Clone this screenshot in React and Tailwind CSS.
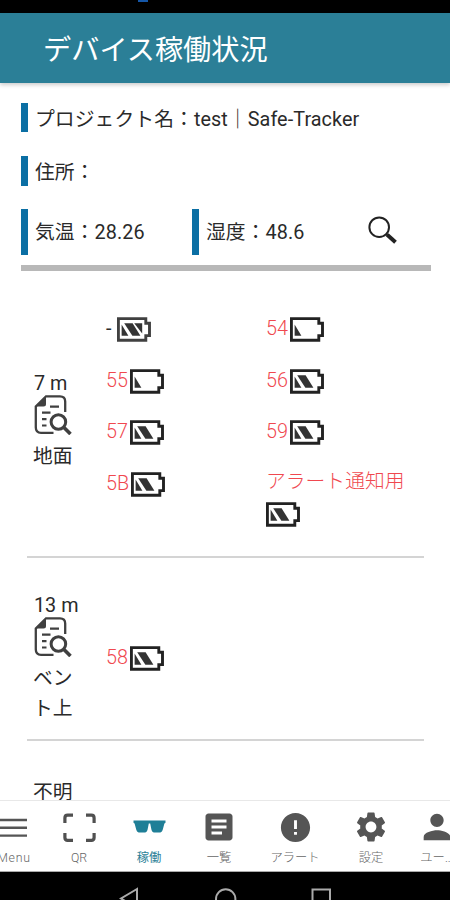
import React from "react";
import { MdArticle, MdError, MdSettings, MdPerson } from "react-icons/md";

const groups = [
  {
    height: "7 m",
    place: "地面",
    devices: [
      { name: "-", level: "full", normal: true },
      { name: "54", level: "low" },
      { name: "55", level: "low" },
      { name: "56", level: "half" },
      { name: "57", level: "half" },
      { name: "59", level: "half" },
      { name: "5B", level: "half" },
      { name: "アラート通知用", level: "half", wrap: true },
    ],
  },
  {
    height: "13 m",
    place: "ベント上",
    devices: [{ name: "58", level: "half" }],
  },
];

const Battery = ({ level }) => (
  <svg
    className={`h-[25px] w-[34px] shrink-0 ${level === "full" ? "text-[#404040]" : "text-[#222]"}`}
    viewBox="0 0 34 25"
    fill="none"
  >
    <path d="M1.4 1.6H28.8V6.2H32.5V18.6H28.8V23.2H1.4Z" stroke="currentColor" strokeWidth="2.9" />
    <path d="M4.6 7.5V18.8H11.4Z" fill="#333" />
    {level !== "low" && <path d="M7.2 6.2H15.6L23.4 18.8H15.4Z" fill="#333" />}
    {level === "full" && <path d="M17.2 6.2H25.2V16.6Z" fill="#333" />}
  </svg>
);

const DocSearch = () => (
  <svg className="h-10 w-[38px]" viewBox="0 0 38 40" fill="none" stroke="#404040" strokeWidth="2.3">
    <path d="M31.2 17V6.5Q31.2 1.3 26 1.3H12L1.8 11.5V32.5Q1.8 37.8 7 37.8H19.5" />
    <path d="M12 1.3L1.8 11.5H9.5Q12 11.5 12 9Z" fill="#404040" stroke="none" />
    <path d="M16 11.7H25M8 17.6H16.5M8 24.2H12.5M8 30.5H12.5" strokeWidth="2.2" />
    <circle cx="24.4" cy="27" r="7.3" strokeWidth="3" />
    <path d="M29.7 32.3L36.5 39" strokeWidth="3.6" />
  </svg>
);

const SearchIcon = () => (
  <svg className="mb-1 h-7 w-[30px]" viewBox="0 0 30 28" fill="none" stroke="#222">
    <circle cx="11.2" cy="11.2" r="9.8" strokeWidth="2" />
    <path d="M17.8 18L20.3 20" strokeWidth="2" />
    <path d="M19.2 18.8L27.5 26.2" strokeWidth="4" />
  </svg>
);

const MenuIcon = () => (
  <svg className="h-9 w-9" viewBox="0 0 36 36" stroke="#555" strokeWidth="2.4">
    <path d="M4 11H31M4 18.8H31M4 26.6H31" />
  </svg>
);

const ScanIcon = () => (
  <svg className="h-9 w-9" viewBox="0 0 36 36" fill="none" stroke="#505050" strokeWidth="3.2" strokeLinejoin="round">
    <path d="M3.9 14V9Q3.9 6.2 6.7 6.2H12M25 6.2H30.3Q33.1 6.2 33.1 9V14M33.1 24V28.6Q33.1 31.4 30.3 31.4H25M12 31.4H6.7Q3.9 31.4 3.9 28.6V24" />
  </svg>
);

const GlassesIcon = () => (
  <svg className="h-9 w-9" viewBox="0 0 36 36" fill="#1f7f97">
    <path d="M2.5 11.6H34.5V13.8L33.4 14.6L31.8 20.4Q30.8 23.6 28 23.6H24.2Q21.2 23.6 20.4 20.4L19.2 14.4H17.8L16.6 20.4Q15.8 23.6 12.8 23.6H9Q6.2 23.6 5.2 20.4L3.6 14.6L2.5 13.8Z" />
  </svg>
);

const navItems = [
  { label: "Menu", icon: <MenuIcon />, width: "w-[60px]", latin: true },
  { label: "QR", icon: <ScanIcon />, width: "w-[70px]" },
  { label: "稼働", icon: <GlassesIcon />, width: "w-[70px]", active: true },
  { label: "一覧", icon: <MdArticle size={36} />, width: "w-[70px]" },
  { label: "アラート", icon: <MdError size={35} />, width: "w-[82px]" },
  { label: "設定", icon: <MdSettings size={36} />, width: "w-[70px]" },
  { label: "ユー...", icon: <MdPerson size={40} />, width: "w-[62px]" },
];

const InfoRow = ({ children, className }) => (
  <div className={`flex items-center border-l-[7px] border-[#0b6fa4] pl-[7px] tracking-[0.08px] ${className}`}>
    {children}
  </div>
);

const Device = ({ device }) => (
  <div className={`flex leading-[25px] ${device.wrap ? "-mt-[2px] flex-col gap-2" : "h-[25px]"}`}>
    <span
      className={
        device.normal ? "mr-[6px] -mt-[1px]" : "-mt-[1px] mr-[2px] font-light text-[#f0484f]"
      }
    >
      {device.name}
    </span>
    <Battery level={device.level} />
  </div>
);

const Group = ({ group, className }) => (
  <section className={`ml-[27px] mr-[26px] flex items-center border-b-2 border-[#d4d4d4] pl-[7px] ${className}`}>
    <div className="w-[72px]">
      <div className="h-[23px] leading-6">{group.height}</div>
      <DocSearch />
      <div className="mt-[7px] w-[42px] -translate-x-px leading-[30px]">{group.place}</div>
    </div>
    <div className="grid grid-cols-[160px_1fr] gap-y-[26.5px]">
      {group.devices.map((device) => (
        <Device key={device.name} device={device} />
      ))}
    </div>
  </section>
);

const App = () => {
  return (
    <div className="flex h-[900px] w-[450px] flex-col overflow-hidden bg-white font-[Roboto,'Noto_Sans_CJK_JP',sans-serif] text-[19.8px] text-[#2a2a2a]">
      {/* Status bar */}
      <div className="h-[13px] shrink-0 bg-black pl-[138px]">
        <div className="h-[2px] w-[10px] bg-[#1557a8]" />
      </div>

      <header className="z-10 flex h-[70px] shrink-0 items-center bg-[#2b7f97] pl-[43px] pt-[6px] text-[28.2px] text-white shadow-[0_2px_4px_rgba(0,0,0,0.2)]">
        デバイス稼働状況
      </header>

      <main className="min-h-0 flex-1 overflow-hidden">
        <div className="mx-[21px] mr-[19px] border-b-[6px] border-[#b8b8b8] pb-[10px] pt-5">
          <InfoRow className="h-[29px] pt-1">プロジェクト名：test｜Safe-Tracker</InfoRow>
          <InfoRow className="mt-6 h-[30px] pt-[3px]">住所：</InfoRow>
          <div className="mt-[23px] flex items-center">
            <InfoRow className="h-[46px] w-[171px] pt-px">気温：28.26</InfoRow>
            <InfoRow className="h-[46px] w-[176px] pt-px">湿度：48.6</InfoRow>
            <SearchIcon />
          </div>
        </div>

        <Group group={groups[0]} className="h-[287px] pt-[17px]" />
        <Group group={groups[1]} className="h-[183px] pt-5" />
        <div className="pl-[33px] pt-[37px] leading-[30px]">不明</div>
      </main>

      {/* Bottom tabs */}
      <nav className="h-[72px] shrink-0 overflow-hidden border-b border-t border-b-[#aaa] border-t-[#e8e8e8] bg-white">
        <div className="-ml-4 flex w-[484px]">
          {navItems.map((item) => (
            <div key={item.label} className={`flex flex-col items-center text-[#555] ${item.width}`}>
              <div className="flex h-[47px] items-center pt-[5px]">{item.icon}</div>
              <span
                className={`whitespace-nowrap text-[12.3px] leading-[20px] ${
                  item.active ? "text-[#2b7f97]" : "font-light text-[#666]"
                } ${item.latin ? "tracking-[0.8px]" : ""}`}
              >
                {item.label}
              </span>
            </div>
          ))}
        </div>
      </nav>

      {/* Android buttons */}
      <div className="h-7 shrink-0 bg-black">
        <svg className="h-7 w-[450px]" viewBox="0 0 450 28" fill="none" stroke="#aaa" strokeWidth="2">
          <path d="M137 17L121 26.5L137 36Z" />
          <circle cx="225.7" cy="27" r="9.7" />
          <rect x="312.5" y="17.5" width="17.5" height="18" />
        </svg>
      </div>
    </div>
  );
};

export default App;
